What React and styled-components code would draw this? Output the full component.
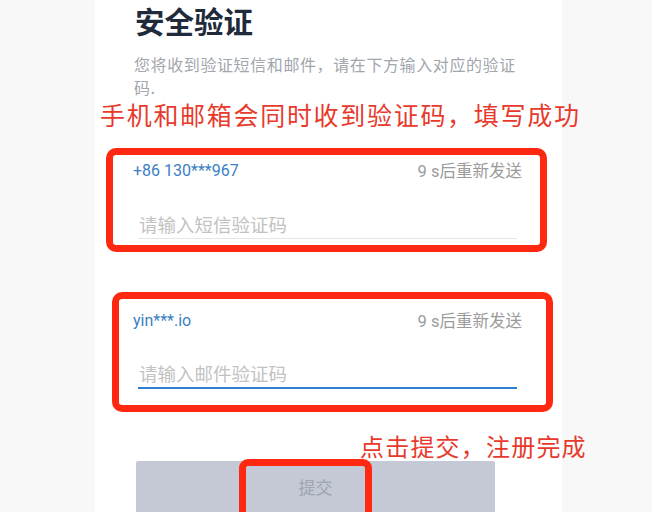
import styled, { createGlobalStyle } from 'styled-components';

const GlobalStyle = createGlobalStyle`
  html, body {
    margin: 0;
    padding: 0;
    background: #f8f8f8;
  }
  body {
    font-family: Roboto, "Noto Sans CJK SC", sans-serif;
  }
`;

const Page = styled.div`
  display: flex;
  width: 652px;
  height: 512px;
  overflow: hidden;
  background: #f8f8f8;
`;

const Panel = styled.div`
  display: flex;
  flex-direction: column;
  margin-left: 95px;
  width: 467px;
  height: 512px;
  background: #ffffff;
  & > * {
    flex-shrink: 0;
  }
`;

const Title = styled.h1`
  margin: 0 0 0 40px;
  font-size: 29.5px;
  line-height: 40px;
  font-weight: 700;
  color: #1f2b3b;
  font-family: "Noto Sans CJK SC", sans-serif;
`;

const Subtitle = styled.p`
  margin: 13px 0 0 39px;
  width: 392px;
  font-size: 16px;
  letter-spacing: 0.6px;
  line-height: 23px;
  color: #a2a6ad;
  font-family: "Noto Sans CJK SC", sans-serif;
`;

const Note = styled.div`
  margin: ${(p) => p.$top}px 0 0 ${(p) => p.$left}px;
  font-size: ${(p) => p.$size}px;
  letter-spacing: ${(p) => p.$spacing}px;
  line-height: 30px;
  white-space: nowrap;
  color: #e73a2c;
  font-family: "Noto Sans CJK SC", sans-serif;
`;

const Frame = styled.div`
  box-sizing: border-box;
  margin: ${(p) => p.$top}px 0 0 ${(p) => p.$left}px;
  width: 441px;
  height: ${(p) => p.$height}px;
  border: 7px solid #ff2912;
  border-radius: 10px;
  padding: ${(p) => p.$padTop}px 0 0 ${(p) => 31 - p.$left}px;
`;

const Field = styled.div`
  display: flex;
  flex-direction: column;
  width: 389px;
`;

const TopRow = styled.div`
  display: flex;
  justify-content: space-between;
  align-items: center;
  height: 20px;
  font-size: 16px;
`;

const Target = styled.span`
  color: #3a80c3;
`;

const Resend = styled.span`
  color: #9b9b9b;
  font-size: 16.5px;
`;

const CodeInput = styled.input`
  box-sizing: border-box;
  margin: ${(p) => p.$gap}px 0 0 5px;
  width: 379px;
  height: ${(p) => (p.$active ? 28 : 27)}px;
  padding: 0 0 3px 1px;
  border: none;
  border-bottom: ${(p) => (p.$active ? '2px solid #2f80d1' : '1px solid #e6e6e6')};
  outline: none;
  background: transparent;
  font-size: 18.5px;
  font-family: "Noto Sans CJK SC", sans-serif;
  color: #333;
  &::placeholder {
    color: #c2c2c2;
  }
`;

const SubmitButton = styled.button`
  position: relative;
  margin: 0 0 0 41px;
  width: 359px;
  height: 60px;
  padding: 0 0 10px;
  border: none;
  border-radius: 2px;
  background: #c4c9d5;
  color: #9fa5b2;
  font-size: 17px;
  font-family: "Noto Sans CJK SC", sans-serif;
`;

const Highlight = styled.span`
  position: absolute;
  top: -2px;
  left: 103px;
  width: 133px;
  height: 70px;
  box-sizing: border-box;
  border: 7px solid #ff2912;
  border-radius: 9px;
`;

export default function App() {
  return (
    <>
      <GlobalStyle />
      <Page>
        <Panel>
          <Title>安全验证</Title>
          <Subtitle>您将收到验证短信和邮件，请在下方输入对应的验证码.</Subtitle>
          <Note $top={0} $left={5} $size={25} $spacing={1.7}>
            手机和邮箱会同时收到验证码，填写成功
          </Note>
          <Frame $top={19} $left={11} $height={104} $padTop={5}>
            <Field>
              <TopRow>
                <Target>+86 130***967</Target>
                <Resend>9 s后重新发送</Resend>
              </TopRow>
              <CodeInput $gap={32} placeholder="请输入短信验证码" />
            </Field>
          </Frame>
          <Frame $top={40} $left={17} $height={120} $padTop={11}>
            <Field>
              <TopRow>
                <Target>yin***.io</Target>
                <Resend>9 s后重新发送</Resend>
              </TopRow>
              <CodeInput $gap={31} $active placeholder="请输入邮件验证码" />
            </Field>
          </Frame>
          <Note $top={19} $left={265} $size={24} $spacing={1.2}>
            点击提交，注册完成
          </Note>
          <SubmitButton type="button">
            提交
            <Highlight />
          </SubmitButton>
        </Panel>
      </Page>
    </>
  );
}
